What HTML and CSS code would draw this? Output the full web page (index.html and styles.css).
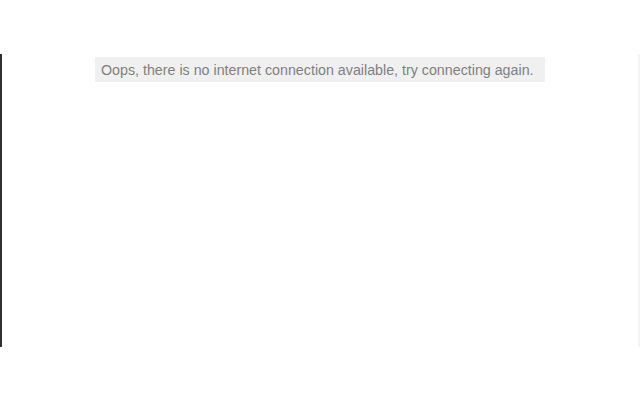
FILE: index.html
```html
<!DOCTYPE html>
<html lang="en">
<head>
    <meta charset="UTF-8">
    <title>Offline</title>
    <link rel="stylesheet" href="styles.css">
</head>
<body>
    <div class="frame">
        <div class="offline-message">
            Oops, there is no internet connection available, try connecting again.
        </div>
    </div>
</body>
</html>
```

FILE: styles.css
```css
* {
    margin: 0;
    padding: 0;
    box-sizing: border-box;
}

body {
    font-family: "Liberation Sans", Arial, sans-serif;
    background-color: #fff;
    padding-top: 54px;
}

.frame {
    height: 293px;
    border-left: 2px solid #2f2f2f;
    border-right: 2px solid #f4f4f4;
    padding-top: 3px;
}

.offline-message {
    width: 450px;
    height: 25px;
    margin: 0 auto;
    padding: 3px 6px 0;
    background-color: #f0f0f0;
    color: #808080;
    font-size: 14.25px;
    line-height: 20px;
    white-space: nowrap;
}
```
